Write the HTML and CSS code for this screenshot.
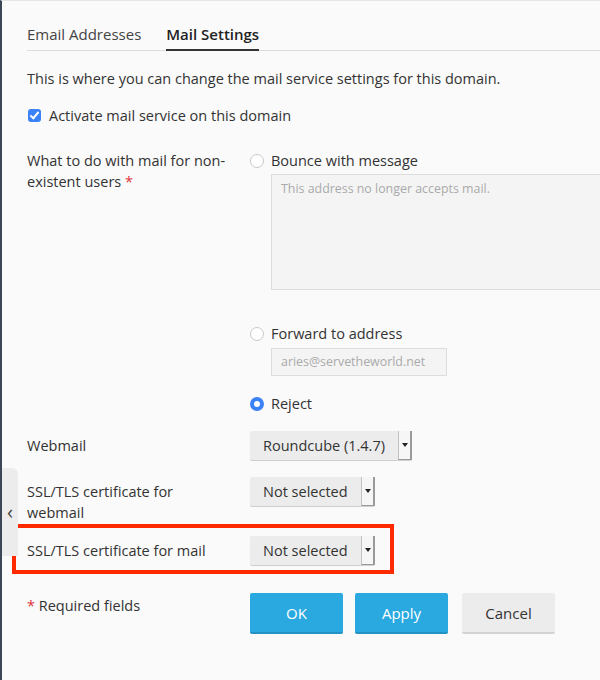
FILE: index.html
```html
<!DOCTYPE html>
<html lang="en">
<head>
    <meta charset="UTF-8">
    <meta name="viewport" content="width=device-width, initial-scale=1.0">
    <title>Mail Settings</title>
    <link rel="stylesheet" href="styles.css">
</head>
<body>
<div class="page">

    <!-- collapsed side panel handle -->
    <div class="side-handle">&lsaquo;</div>

    <!-- Tabs -->
    <ul class="tabs">
        <li class="tab">Email Addresses</li>
        <li class="tab active">Mail Settings</li>
    </ul>

    <p class="hint">This is where you can change the mail service settings for this domain.</p>

    <label class="check-row">
        <span class="checkbox"></span>
        Activate mail service on this domain
    </label>

    <!-- Non-existent users -->
    <div class="form-row first">
        <div class="form-label">What to do with mail for non-existent users <span class="req">*</span></div>
        <div class="form-field">
            <div class="radio-row"><span class="radio"></span>Bounce with message</div>
            <div class="textarea">This address no longer accepts mail.</div>

            <div class="radio-row forward"><span class="radio"></span>Forward to address</div>
            <div class="text-input">aries@servetheworld.net</div>

            <div class="radio-row reject"><span class="radio checked"></span>Reject</div>
        </div>
    </div>

    <div class="form-row">
        <div class="form-label">Webmail</div>
        <div class="form-field">
            <div class="select"><span class="select-value">Roundcube (1.4.7)</span><span class="select-arrow"></span></div>
        </div>
    </div>

    <div class="form-row">
        <div class="form-label">SSL/TLS certificate for webmail</div>
        <div class="form-field">
            <div class="select"><span class="select-value">Not selected</span><span class="select-arrow"></span></div>
        </div>
    </div>

    <div class="form-row highlight">
        <div class="form-label">SSL/TLS certificate for mail</div>
        <div class="form-field">
            <div class="select"><span class="select-value">Not selected</span><span class="select-arrow"></span></div>
        </div>
    </div>

    <!-- Buttons -->
    <div class="form-row footer">
        <div class="form-label"><span class="req">*</span> Required fields</div>
        <div class="form-field buttons">
            <button class="btn primary">OK</button>
            <button class="btn primary">Apply</button>
            <button class="btn">Cancel</button>
        </div>
    </div>

</div>
</body>
</html>
```

FILE: styles.css
```css
body {
    margin: 0;
    background: #fafafa;
    font-family: "Open Sans", "Liberation Sans", sans-serif;
    font-size: 14.5px;
    color: #333;
}
.page {
    position: relative;
    min-height: 679px;
    border-left: 2px solid #3b4657;
    border-top: 1px solid #e6e6e6;
    padding-left: 25px;
    overflow: hidden;
}
.side-handle {
    position: absolute;
    left: 0;
    top: 467px;
    width: 16px;
    height: 88px;
    background: #ececec;
    border-top-right-radius: 6px;
    color: #444;
    font-size: 20px;
    line-height: 88px;
    text-align: center;
}

/* tabs */
.tabs {
    display: flex;
    gap: 25px;
    list-style: none;
    margin: 23px 0 0;
    padding: 0;
    border-bottom: 1px solid #ddd;
}
.tab {
    font-size: 15px;
    line-height: 21px;
    padding-bottom: 4px;
    color: #444;
    margin-bottom: -1px;
    border-bottom: 2px solid transparent;
}
.tab.active {
    font-weight: 600;
    color: #222;
    border-bottom-color: #333;
}

.hint {
    margin: 17px 0 0;
    line-height: 21px;
}
.check-row {
    display: flex;
    align-items: center;
    margin-top: 16px;
    line-height: 21px;
}
.checkbox {
    width: 13px;
    height: 13px;
    margin: 0 8px 0 1px;
    border-radius: 3px;
    background: #3b82f6;
    position: relative;
}
.checkbox::after {
    content: "";
    position: absolute;
    left: 4px;
    top: 1px;
    width: 3px;
    height: 7px;
    border: solid #fff;
    border-width: 0 2px 2px 0;
    transform: rotate(40deg);
}

/* form rows */
.form-row {
    display: flex;
    margin-top: 17px;
}
.form-row.first {
    margin-top: 24px;
}
.form-label {
    flex: 0 0 201px;
    margin-right: 22px;
    line-height: 21px;
    padding-top: 4px;
}
.form-row.first .form-label {
    padding-top: 0;
}
.req {
    color: #e0313a;
}

.radio-row {
    display: flex;
    align-items: center;
    line-height: 21px;
}
.radio-row.forward {
    margin-top: 33px;
}
.radio-row.reject {
    margin-top: 17px;
}
.radio {
    box-sizing: border-box;
    width: 14px;
    height: 14px;
    margin-right: 7px;
    border: 1px solid #c8c8c8;
    border-radius: 50%;
    background: #fff;
}
.radio.checked {
    border: 4px solid #3b82f6;
}

.textarea {
    box-sizing: border-box;
    width: 340px;
    height: 116px;
    margin: 3px 0 0 21px;
    padding: 5px 9px;
    background: #f4f4f4;
    border: 1px solid #ddd;
    font-size: 12.4px;
    color: #aaa;
}
.text-input {
    box-sizing: border-box;
    width: 176px;
    height: 28px;
    margin: 4px 0 0 21px;
    padding: 0 9px;
    background: #f4f4f4;
    border: 1px solid #ddd;
    font-size: 12.4px;
    line-height: 26px;
    color: #aaa;
}

/* dropdown */
.select {
    display: inline-flex;
    height: 29px;
    background: #ececec;
    border-radius: 2px;
    box-shadow: 0 1px 0 #cfcfcf;
}
.select-value {
    padding: 0 13px;
    line-height: 29px;
    color: #333;
}
.select-arrow {
    position: relative;
    width: 14px;
    background: #f6f6f6;
    border-left: 1px solid #c2c2c2;
    border-right: 2px solid #9a9a9a;
    border-bottom: 1px solid #9a9a9a;
    box-sizing: border-box;
}
.select-arrow::after {
    content: "";
    position: absolute;
    left: 3px;
    top: 12px;
    border: 3px solid transparent;
    border-top: 4px solid #222;
}

.highlight {
    width: 363px;
    margin: 1px 0 0 -15px;
    padding: 8px 0 5px 11px;
    border: 4px solid #ff2a00;
}

/* footer */
.footer {
    margin-top: 19px;
}
.footer .form-label {
    padding-top: 2px;
}
.buttons {
    display: flex;
    gap: 12px;
}
.btn {
    width: 93px;
    height: 41px;
    border: none;
    border-radius: 2px;
    border-bottom: 2px solid #d2d2d2;
    background: #ececec;
    color: #333;
    font-family: "Open Sans", "Liberation Sans", sans-serif;
    font-size: 15px;
    padding: 0;
}
.btn.primary {
    background: #29a9df;
    border-bottom-color: #2293c4;
    color: #fff;
}
.btn:last-child {
    margin-left: 2px;
}
```
